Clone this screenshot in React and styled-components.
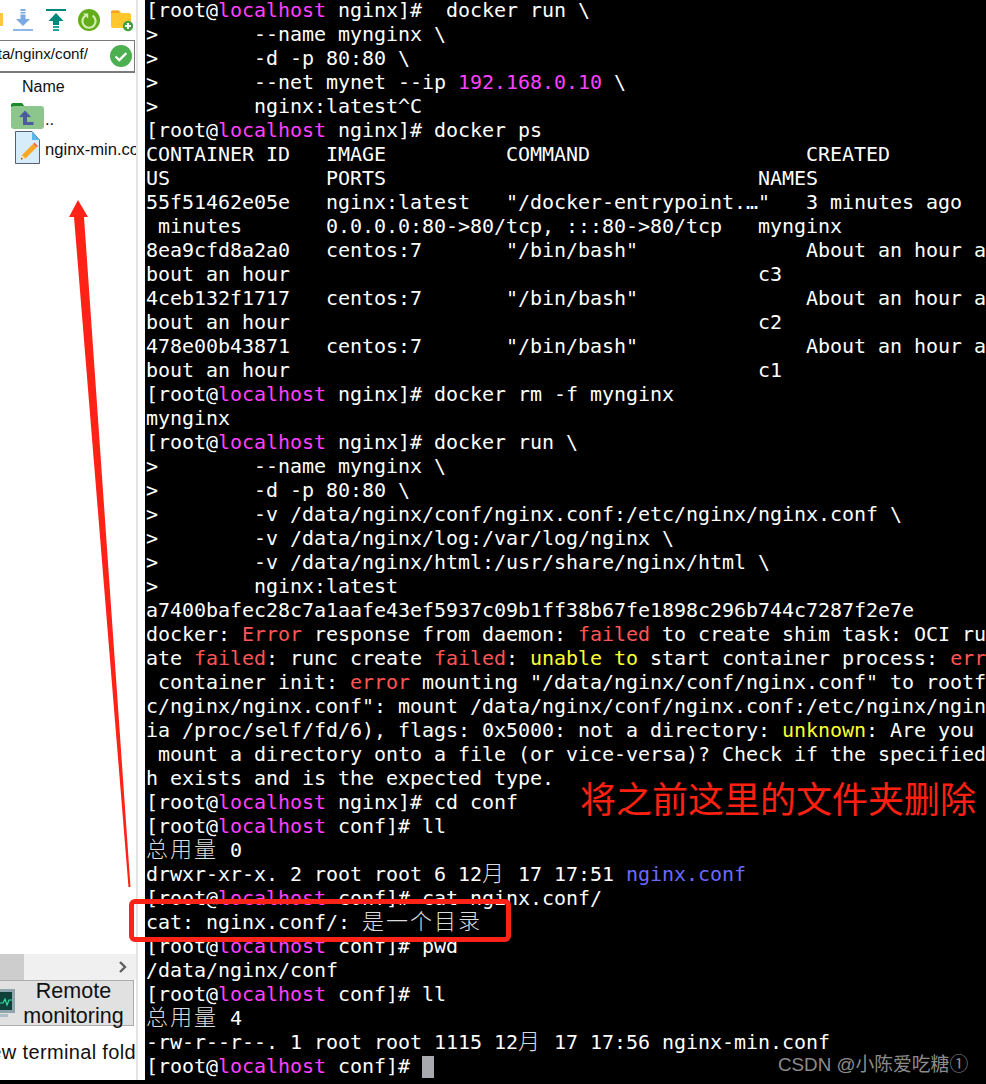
import React from 'react';
import styled, { createGlobalStyle } from 'styled-components';

const Global = createGlobalStyle`
  html, body { margin: 0; padding: 0; background: #000; overflow: hidden; }
  #root { height: 1084px; }
`;

const Page = styled.div`
  position: relative;
  width: 986px;
  height: 1084px;
  display: flex;
  overflow: hidden;
  background: #000;
`;

const Sidebar = styled.aside`
  width: 145px;
  height: 1080px;
  flex: none;
  display: flex;
  background: #fff;
  font-family: "Liberation Sans", Arial, sans-serif;
  color: #111;
`;

const Panel = styled.div`
  width: 136px;
  display: flex;
  flex-direction: column;
  border-right: 2px solid #e3e3e3;
  overflow: hidden;
`;

const Toolbar = styled.div`
  height: 40px;
  flex: none;
  display: flex;
  align-items: flex-start;
  padding-top: 8px;
  box-sizing: border-box;
`;

const ToolIcon = styled.svg`
  display: block;
  flex: none;
  margin-left: ${p => p.$gap}px;
  margin-top: ${p => p.$drop || 0}px;
`;

const PathField = styled.div`
  height: 33px;
  width: 135px;
  flex: none;
  box-sizing: border-box;
  display: flex;
  align-items: center;
  border: solid #7a7a7a;
  border-width: 1px 1px 2px 0;
`;

const PathText = styled.div`
  width: 88px;
  display: flex;
  justify-content: flex-end;
  overflow: hidden;
  white-space: nowrap;
  font-size: 15.2px;
  margin-top: -5px;
`;

const CheckIcon = styled.svg`
  display: block;
  margin-left: auto;
  margin-right: 2px;
`;

const HeaderRow = styled.div`
  padding: 4px 0 0 22px;
  height: 24px;
  flex: none;
  font-size: 16px;
  line-height: 19px;
`;

const FileRow = styled.div`
  display: flex;
  align-items: ${p => (p.$up ? 'flex-end' : 'center')};
  height: ${p => p.$h}px;
  flex: none;
  padding-left: ${p => p.$pad}px;
  font-size: 16.6px;
  white-space: nowrap;
`;

const FileName = styled.span`
  margin-left: ${p => p.$gap}px;
  padding-top: ${p => p.$drop || 0}px;
  line-height: 18px;
`;

const FileGlyph = styled.svg`
  display: block;
  flex: none;
`;

const Spacer = styled.div`
  flex: 1;
`;

const HScroll = styled.div`
  height: 26px;
  flex: none;
  display: flex;
  align-items: stretch;
  justify-content: space-between;
  background: #f0f0f0;
`;

const HThumb = styled.div`
  width: 24px;
  background: #cdcdcd;
`;

const ScrollArrow = styled.svg`
  display: block;
  align-self: center;
  margin-right: 8px;
`;

const MonitorButton = styled.div`
  width: 134px;
  height: 46px;
  flex: none;
  box-sizing: border-box;
  background: #e1e1e1;
  border: solid #adadad;
  border-width: 1px 1px 1px 0;
  display: flex;
  align-items: center;
`;

const MonitorLabel = styled.div`
  flex: 1;
  text-align: center;
  font-size: 21.5px;
  line-height: 25px;
  padding-top: 1px;
  margin-right: 1px;
`;

const Footer = styled.div`
  height: 54px;
  flex: none;
  display: flex;
  justify-content: flex-end;
  overflow: hidden;
  white-space: nowrap;
  font-size: 20px;
  letter-spacing: 0.35px;
  line-height: 52px;
`;

const Terminal = styled.main`
  flex: 1;
  min-width: 0;
  height: 1084px;
  box-sizing: border-box;
  padding: 0 0 0 1px;
  background: #000;
  overflow: hidden;
  font-family: "DejaVu Sans Mono", "Noto Sans CJK SC", monospace;
  font-size: 20px;
  letter-spacing: -0.04px;
  color: #fff;
`;

const Lines = styled.div`
  margin-top: -2px;
`;

const Line = styled.div`
  height: 24px;
  line-height: 24px;
  white-space: pre;
`;

const tones = { m: '#ff40ff', r: '#ff5555', y: '#ffff33', b: '#6a6aff' };

const Seg = styled.span`
  color: ${p => tones[p.$tone]};
`;

const Cjk = styled.span`
  font-family: "Noto Sans CJK SC", sans-serif;
  font-weight: 300;
  font-size: 22px;
  line-height: 0;
  letter-spacing: 2px;
  color: #dcdcdc;
`;

const Cursor = styled.span`
  display: inline-block;
  width: 12px;
  height: 22px;
  background: #a9a9b0;
  vertical-align: -5px;
`;

const Overlay = styled.svg`
  position: absolute;
  left: 0;
  top: 0;
  pointer-events: none;
`;

const RedBox = styled.div`
  position: absolute;
  left: 129px;
  top: 899px;
  width: 382px;
  height: 43px;
  box-sizing: border-box;
  border: 5px solid #ff2216;
  border-radius: 6px;
`;

const Note = styled.div`
  position: absolute;
  left: 580px;
  top: 772px;
  font-family: "Noto Sans CJK SC", sans-serif;
  font-size: 36px;
  line-height: 50px;
  color: #ff2012;
  white-space: nowrap;
`;

const Watermark = styled.div`
  position: absolute;
  left: 778px;
  top: 1052px;
  font-family: "Liberation Sans", "Noto Sans CJK SC", sans-serif;
  font-size: 18.8px;
  line-height: 26px;
  color: #8c8c8c;
  white-space: nowrap;
`;

const P = 'root@{m:localhost}';
const lines = [
  `[${P} nginx]#  docker run \\`,
  '>        --name mynginx \\',
  '>        -d -p 80:80 \\',
  '>        --net mynet --ip {m:192.168.0.10} \\',
  '>        nginx:latest^C',
  `[${P} nginx]# docker ps`,
  'CONTAINER ID   IMAGE          COMMAND                  CREATED',
  'US             PORTS                               NAMES',
  '55f51462e05e   nginx:latest   "/docker-entrypoint.…"   3 minutes ago',
  ' minutes       0.0.0.0:80->80/tcp, :::80->80/tcp   mynginx',
  '8ea9cfd8a2a0   centos:7       "/bin/bash"              About an hour a',
  'bout an hour                                       c3',
  '4ceb132f1717   centos:7       "/bin/bash"              About an hour a',
  'bout an hour                                       c2',
  '478e00b43871   centos:7       "/bin/bash"              About an hour a',
  'bout an hour                                       c1',
  `[${P} nginx]# docker rm -f mynginx`,
  'mynginx',
  `[${P} nginx]# docker run \\`,
  '>        --name mynginx \\',
  '>        -d -p 80:80 \\',
  '>        -v /data/nginx/conf/nginx.conf:/etc/nginx/nginx.conf \\',
  '>        -v /data/nginx/log:/var/log/nginx \\',
  '>        -v /data/nginx/html:/usr/share/nginx/html \\',
  '>        nginx:latest',
  'a7400bafec28c7a1aafe43ef5937c09b1ff38b67fe1898c296b744c7287f2e7e',
  'docker: {r:Error} response from daemon: {r:failed} to create shim task: OCI ru',
  'ate {r:failed}: runc create {r:failed}: {y:unable to} start container process: {r:err}',
  ' container init: {r:error} mounting "/data/nginx/conf/nginx.conf" to rootf',
  'c/nginx/nginx.conf": mount /data/nginx/conf/nginx.conf:/etc/nginx/nginx',
  'ia /proc/self/fd/6), flags: 0x5000: not a directory: {y:unknown}: Are you',
  ' mount a directory onto a file (or vice-versa)? Check if the specified',
  'h exists and is the expected type.',
  `[${P} nginx]# cd conf`,
  `[${P} conf]# ll`,
  '{c:总用量} 0',
  'drwxr-xr-x. 2 root root 6 12{c:月} 17 17:51 {b:nginx.conf}',
  `[${P} conf]# cat nginx.conf/`,
  'cat: nginx.conf/: {c:是一个目录}',
  `[${P} conf]# pwd`,
  '/data/nginx/conf',
  `[${P} conf]# ll`,
  '{c:总用量} 4',
  '-rw-r--r--. 1 root root 1115 12{c:月} 17 17:56 nginx-min.conf',
  `[${P} conf]# {k:}`,
];

function renderLine(text) {
  const parts = text.split(/(\{[mrybck]:[^}]*\})/);
  return parts.map((part, i) => {
    const match = part.match(/^\{([mrybck]):([^}]*)\}$/);
    if (!match) return part;
    if (match[1] === 'c') return <Cjk key={i}>{match[2]}</Cjk>;
    if (match[1] === 'k') return <Cursor key={i} />;
    return <Seg key={i} $tone={match[1]}>{match[2]}</Seg>;
  });
}

const Clipped = () => (
  <ToolIcon $gap={0} width="3" height="24" viewBox="0 0 3 24">
    <path d="M0 5h3v13H0z" fill="#ffc73b" />
  </ToolIcon>
);

const DownloadIcon = () => (
  <ToolIcon $gap={10} width="20" height="24" viewBox="0 0 20 24">
    <path d="M7.5 1h5v2h-5zM7.5 4h5v1.5h-5zM7.5 6.5h5V11H17l-7 7-7-7h4.5z" fill="#7aa9e4" />
    <path d="M0 21h20v2H0z" fill="#8fb7ea" />
  </ToolIcon>
);

const UploadIcon = () => (
  <ToolIcon $gap={13} width="20" height="24" viewBox="0 0 20 24">
    <path d="M0 1h20v2H0z" fill="#00897b" />
    <path d="M10 5l7.5 8H13v4H7v-4H2.5z" fill="#00897b" />
    <path d="M7 18h6v2H7zM7 21h6v2H7z" fill="#26a69a" />
  </ToolIcon>
);

const RefreshIcon = () => (
  <ToolIcon $gap={12} $drop={1} width="22" height="24" viewBox="0 0 22 24">
    <circle cx="11" cy="11" r="11" fill="#64ad1a" />
    <path d="M7.4 6.6a6.6 6.6 0 1 0 7.2 0" fill="none" stroke="#d5ecb8" strokeWidth="2.2" />
    <path d="M5 4.5h5.2v5.2z" fill="#d5ecb8" />
  </ToolIcon>
);

const FolderPlusIcon = () => (
  <ToolIcon $gap={11} width="23" height="24" viewBox="0 0 23 24">
    <path d="M0 4.5a2 2 0 0 1 2-2h6l2.5 2.5H18a2 2 0 0 1 2 2V18a2 2 0 0 1-2 2H2a2 2 0 0 1-2-2z" fill="#ffc62e" />
    <path d="M0 5h9l-1.6-2.5H2A2 2 0 0 0 0 5z" fill="#f4a21d" />
    <circle cx="17" cy="18" r="5.2" fill="#43a047" />
    <path d="M16 15h2v2h2v2h-2v2h-2v-2h-2v-2h2z" fill="#fff" />
  </ToolIcon>
);

const VerifyIcon = () => (
  <CheckIcon width="22" height="22" viewBox="0 0 22 22">
    <circle cx="11" cy="11" r="11" fill="#4caf50" />
    <path d="M5.5 11.5l3.8 3.6 7-7" fill="none" stroke="#fff" strokeWidth="2.2" />
  </CheckIcon>
);

const FolderUpIcon = () => (
  <FileGlyph width="33" height="27" viewBox="0 0 33 27">
    <path d="M0 3a2 2 0 0 1 2-2h9l3 4H0z" fill="#1b8a2a" />
    <rect x="0" y="4" width="33" height="23" rx="3" fill="#8cc68c" />
    <path d="M8 15l6-6.5 6 6.5h-4v5h6.5v3H12v-8z" fill="#4e5aa0" />
  </FileGlyph>
);

const FileIcon = () => (
  <FileGlyph width="25" height="33" viewBox="0 0 25 33">
    <path d="M.5.5H17L24.5 9v23.5H.5z" fill="#d6ecfb" stroke="#56606a" />
    <path d="M17 .5V9h7.5z" fill="#5ab7f0" />
    <path d="M7 24l11-11 3.5 3.5-11 11-4.5 1z" fill="#f9a825" />
    <path d="M6 28.5L7 24l3.5 3.5z" fill="#ffe0b2" />
    <path d="M6 28.5l.4-1.8 1.4 1.4z" fill="#333" />
    <path d="M18 13l1.5-1.5 3.5 3.5-1.5 1.5z" fill="#ef6c4a" />
  </FileGlyph>
);

const ChevronIcon = () => (
  <ScrollArrow width="10" height="12" viewBox="0 0 10 12">
    <path d="M2 1l5 5-5 5" fill="none" stroke="#606060" strokeWidth="2.4" />
  </ScrollArrow>
);

const ScreenIcon = () => (
  <FileGlyph width="15" height="35" viewBox="0 0 15 35">
    <path d="M0 3h15v24H0z" fill="#90a4ae" />
    <path d="M0 6h12v18H0z" fill="#10403a" />
    <path d="M0 17h3l2-4 2 6 2-5h3" fill="none" stroke="#2fe0a0" strokeWidth="1.2" />
    <path d="M0 28h8v3H0z" fill="#b0bec5" />
  </FileGlyph>
);

export default function App() {
  return (
    <>
      <Global />
      <Page>
        <Sidebar>
          <Panel>
            <Toolbar>
              <Clipped />
              <DownloadIcon />
              <UploadIcon />
              <RefreshIcon />
              <FolderPlusIcon />
            </Toolbar>
            <PathField>
              <PathText>/data/nginx/conf/</PathText>
              <VerifyIcon />
            </PathField>
            <HeaderRow>Name</HeaderRow>
            <FileRow $h={28} $pad={11} $up>
              <FolderUpIcon />
              <FileName $gap={1}>..</FileName>
            </FileRow>
            <FileRow $h={36} $pad={15}>
              <FileIcon />
              <FileName $gap={5} $drop={5}>nginx-min.conf</FileName>
            </FileRow>
            <Spacer />
            <HScroll>
              <HThumb />
              <ChevronIcon />
            </HScroll>
            <MonitorButton>
              <ScreenIcon />
              <MonitorLabel>Remote monitoring</MonitorLabel>
            </MonitorButton>
            <Footer>New terminal fold</Footer>
          </Panel>
        </Sidebar>
        <Terminal>
          <Lines>
            {lines.map((text, i) => (
              <Line key={i}>{renderLine(text)}</Line>
            ))}
          </Lines>
        </Terminal>
        <Overlay width="986" height="1084" viewBox="0 0 986 1084">
          <path d="M78 200L88 217H84L130.5 887H128.5L74 217H69Z" fill="#ff2216" />
        </Overlay>
        <RedBox />
        <Note>将之前这里的文件夹删除</Note>
        <Watermark>CSDN @小陈爱吃糖①</Watermark>
      </Page>
    </>
  );
}
